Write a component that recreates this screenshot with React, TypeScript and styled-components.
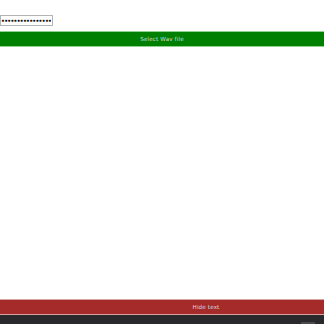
import React from 'react';
import styled, { createGlobalStyle } from 'styled-components';

const GlobalStyle = createGlobalStyle`
  html, body {
    margin: 0;
    padding: 0;
    background: #ffffff;
    font-family: "DejaVu Sans", "Liberation Sans", sans-serif;
  }
`;

// Full-height column
const Page = styled.div`
  display: flex;
  flex-direction: column;
  height: 324px;
  width: 324px;
  overflow: hidden;
`;

const TopRow = styled.div`
  display: flex;
  padding-top: 15px;
  height: 11px;
  margin-bottom: 5px;
`;

const KeyInput = styled.input`
  box-sizing: border-box;
  width: 53px;
  height: 11px;
  margin: 0;
  padding: 0 1px 0 0;
  border: 1px solid #b4b4b4;
  font-family: "DejaVu Sans", sans-serif;
  font-size: 6px;
  font-weight: bold;
  letter-spacing: -0.7px;
  color: #111;
  outline: none;
  background: #fff;
`;

const BarButton = styled.button<{ $tone: 'green' | 'red' }>`
  box-sizing: border-box;
  width: 100%;
  height: 16px;
  margin: 0;
  padding: 0 0 0 ${(p) => (p.$tone === 'red' ? '88px' : '0')};
  border: none;
  border-top: 1px solid ${(p) => (p.$tone === 'green' ? '#8fcf8f' : '#d9a3a3')};
  border-bottom: 1px solid ${(p) => (p.$tone === 'green' ? '#8fcf8f' : '#d9a3a3')};
  background: ${(p) => (p.$tone === 'green' ? '#008000' : '#a52a2a')};
  color: #dcdcdc;
  font-family: "DejaVu Sans", sans-serif;
  font-size: 5.6px;
  letter-spacing: 0.15px;
  text-align: center;
  cursor: pointer;
`;

const Spacer = styled.div`
  flex: 1;
  background: #ffffff;
`;

const Footer = styled.div`
  height: 9px;
  background: #2a2a2c;
  display: flex;
  justify-content: flex-end;
  align-items: flex-end;
  padding-right: 9px;
`;

const FooterTab = styled.div`
  width: 14px;
  height: 2px;
  background: #4a4a4c;
`;

const App: React.FC = () => {
  return (
    <>
      <GlobalStyle />
      <Page>
        <TopRow>
          <KeyInput type="password" readOnly value="aaaaaaaaaaaaaaaaaaaaaa" />
        </TopRow>
        <BarButton $tone="green">Select Wav file</BarButton>
        <Spacer />
        <BarButton $tone="red">Hide text</BarButton>
        <Footer>
          <FooterTab />
        </Footer>
      </Page>
    </>
  );
};

export default App;
